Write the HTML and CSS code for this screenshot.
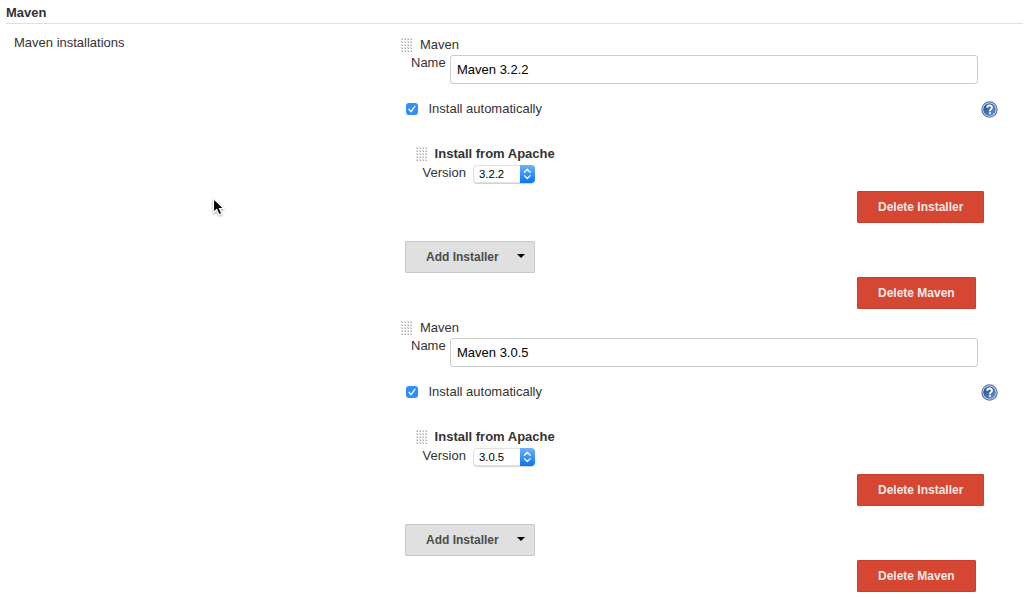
FILE: index.html
```
<!DOCTYPE html>
<html lang="en">
<head>
<meta charset="utf-8">
<title>Maven</title>
<link rel="stylesheet" href="styles.css">
</head>
<body>
<svg class="defs" width="0" height="0">
  <defs>
    <pattern id="dots" width="3" height="3" patternUnits="userSpaceOnUse"><rect width="2" height="2" fill="#dedede"/><rect x="1" y="1" width="1" height="1" fill="#aaa"/></pattern>
    <linearGradient id="helpFill" x1="0" y1="0" x2="1" y2="1"><stop offset="0" stop-color="#1f4b8e"/><stop offset="1" stop-color="#6d97cf"/></linearGradient>
    <symbol id="grip" viewBox="0 0 12 15"><rect width="12" height="15" fill="url(#dots)"/></symbol>
    <symbol id="help" viewBox="0 0 17 17">
      <circle cx="8.5" cy="8.5" r="7.6" fill="#e8eff8" stroke="#5478ae" stroke-width="1.2"/>
      <circle cx="8.5" cy="8.5" r="6.3" fill="url(#helpFill)"/>
      <path d="M6.2 6.8C6.2 3.8 11 3.8 11 6.5C11 8.2 8.9 8.2 8.9 10.2M8.9 11.2V12.9" fill="none" stroke="#fff" stroke-width="1.8"/>
    </symbol>
    <symbol id="check" viewBox="0 0 12 12"><path d="M3 6.3L5.1 8.7L9 3.2" fill="none" stroke="#fff" stroke-width="1.3" stroke-linecap="round" stroke-linejoin="round"/></symbol>
    <symbol id="updown" viewBox="0 0 15 18"><path d="M4.4 7.2L7.3 4.3L10.2 7.2M4.4 10.6L7.3 13.5L10.2 10.6" fill="none" stroke="#fff" stroke-width="1.3" stroke-linecap="round" stroke-linejoin="round"/></symbol>
  </defs>
</svg>
<h1 class="section-title">Maven</h1>
<main class="section">
  <div class="section-label">Maven installations</div>
  <div class="installations">
    <section class="installation">
      <div class="heading"><svg class="grip"><use href="#grip"/></svg><span>Maven</span></div>
      <div class="name-row"><span class="name-label">Name</span><div class="text-input">Maven 3.2.2</div></div>
      <div class="auto-row"><span class="checkbox"><svg width="12" height="12"><use href="#check"/></svg></span><span>Install automatically</span><svg class="help"><use href="#help"/></svg></div>
      <div class="installer-heading"><svg class="grip"><use href="#grip"/></svg><span>Install from Apache</span></div>
      <div class="version-row"><span class="version-label">Version</span><div class="select"><span>3.2.2</span><span class="stepper"><svg width="15" height="18"><use href="#updown"/></svg></span></div></div>
      <div class="button danger delete-installer"><span>Delete Installer</span></div>
      <div class="button add"><span>Add Installer</span><svg class="caret" viewBox="0 0 8 4"><path d="M0 0H8L4 4Z"/></svg></div>
      <div class="button danger delete-maven"><span>Delete Maven</span></div>
    </section>
    <section class="installation">
      <div class="heading"><svg class="grip"><use href="#grip"/></svg><span>Maven</span></div>
      <div class="name-row"><span class="name-label">Name</span><div class="text-input">Maven 3.0.5</div></div>
      <div class="auto-row"><span class="checkbox"><svg width="12" height="12"><use href="#check"/></svg></span><span>Install automatically</span><svg class="help"><use href="#help"/></svg></div>
      <div class="installer-heading"><svg class="grip"><use href="#grip"/></svg><span>Install from Apache</span></div>
      <div class="version-row"><span class="version-label">Version</span><div class="select"><span>3.0.5</span><span class="stepper"><svg width="15" height="18"><use href="#updown"/></svg></span></div></div>
      <div class="button danger delete-installer"><span>Delete Installer</span></div>
      <div class="button add"><span>Add Installer</span><svg class="caret" viewBox="0 0 8 4"><path d="M0 0H8L4 4Z"/></svg></div>
      <div class="button danger delete-maven"><span>Delete Maven</span></div>
    </section>
  </div>
</main>
<svg class="cursor" viewBox="0 0 14 20"><path d="M1.5 1.5V15.5L4.7 12.5L7 17.8L9.8 16.6L7.5 11.5H11.8Z" fill="#000" stroke="#fff" stroke-width="1.2"/></svg>
</body>
</html>
```
FILE: styles.css
```
* { box-sizing: border-box; }
body {
  margin: 0;
  height: 599px;
  overflow: hidden;
  background: #fff;
  color: #333;
  font: 13px/16px "Liberation Sans", Arial, sans-serif;
}
svg { display: block; flex: none; }
.defs { position: absolute; }
.section-title {
  height: 24px;
  margin: 0 3px 0 6px;
  padding-top: 5px;
  border-bottom: 1px solid #e0e0e0;
  font-size: 13px;
  line-height: 16px;
}
.section { display: flex; }
.section-label { width: 400px; padding: 11px 0 0 14px; }
.installations { width: 626px; padding-top: 12px; }
.installation { height: 283px; }
.heading { display: flex; height: 19px; padding: 1px 0 0 1px; gap: 7px; }
.grip { width: 12px; height: 15px; margin-top: 1px; }
.name-row { display: flex; height: 29px; padding-left: 11px; }
.name-label { width: 39px; }
.text-input {
  width: 528px;
  height: 29px;
  padding: 6px;
  border: 1px solid #ccc;
  border-radius: 3px;
  color: #000;
}
.auto-row {
  display: flex;
  align-items: center;
  height: 18px;
  margin-top: 16px;
  padding: 0 28px 0 6px;
}
.checkbox { width: 12px; height: 12px; margin-right: 10.5px; border-radius: 3px; background: #2f8ffb; }
.help { width: 17px; height: 17px; margin-left: auto; }
.installer-heading {
  display: flex;
  height: 19px;
  margin-top: 28px;
  padding-left: 16px;
  gap: 6.6px;
  font-weight: bold;
}
.version-row { display: flex; height: 18px; padding-left: 22.6px; }
.version-label { width: 50.4px; }
.select {
  display: flex;
  justify-content: space-between;
  width: 62px;
  height: 18px;
  padding-left: 6px;
  border-radius: 4px;
  box-shadow: inset 0 0 0 1px #e2e2e2, 0 1px 0 #d4d4d4;
  color: #000;
  font-size: 11.3px;
  line-height: 19px;
}
.stepper { width: 15px; height: 18px; border-radius: 0 4px 4px 0; background: linear-gradient(#6bb3fa, #0b72fb); }
.button {
  display: flex;
  align-items: center;
  height: 32px;
  padding-left: 20px;
  border: 1px solid #c8402c;
  border-radius: 1px;
  font-size: 12px;
  font-weight: bold;
}
.danger { margin-left: 457px; background: #d54633; color: #f3e9e8; }
.delete-installer { width: 127px; margin-top: 8px; }
.delete-maven { width: 119px; margin-top: 4px; }
.add { width: 130px; margin: 18px 0 0 5px; border-color: #c8c8c8; background: #e0e0e0; color: #4d4d4d; }
.caret { width: 8px; height: 4px; margin: 0 9px 2px auto; fill: #000; }
.cursor {
  position: absolute;
  left: 212px;
  top: 197px;
  width: 14px;
  height: 20px;
  filter: drop-shadow(0 1px 1px rgba(0, 0, 0, .35));
}
```
